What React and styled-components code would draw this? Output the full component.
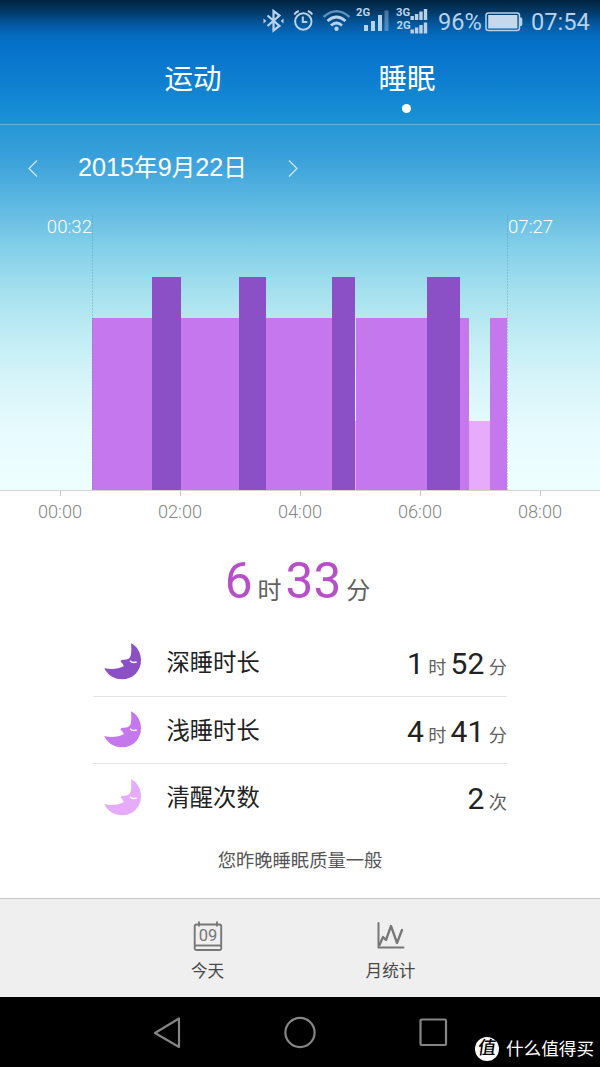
import React from 'react';
import styled, { createGlobalStyle } from 'styled-components';

const colors = {
  deep: '#8b50c6',
  light: '#c578ee',
  awake: '#e6abfb',
};

// Minutes spent in each phase, starting at 00:32
const phases = [
  { type: 'light', minutes: 60 },
  { type: 'deep', minutes: 29 },
  { type: 'light', minutes: 58 },
  { type: 'deep', minutes: 27 },
  { type: 'light', minutes: 66 },
  { type: 'deep', minutes: 23 },
  { type: 'awake', minutes: 1 },
  { type: 'light', minutes: 71 },
  { type: 'deep', minutes: 33 },
  { type: 'light', minutes: 9 },
  { type: 'awake', minutes: 21 },
  { type: 'light', minutes: 17 },
];

const heights = { deep: 213, light: 172, awake: 69 };

const stats = [
  { type: 'deep', label: '深睡时长', parts: [['1', '时'], ['52', '分']] },
  { type: 'light', label: '浅睡时长', parts: [['4', '时'], ['41', '分']] },
  { type: 'awake', label: '清醒次数', parts: [['2', '次']] },
];

const hours = ['00:00', '02:00', '04:00', '06:00', '08:00'];

// Style
const GlobalStyle = createGlobalStyle`
  * { box-sizing: border-box; }
  body {
    margin: 0;
    background: #fff;
    font-family: Roboto, 'Noto Sans CJK SC', sans-serif;
  }
  svg { display: block; flex: none; }
`;
const Screen = styled.div`
  width: 600px;
  height: 1067px;
  display: flex;
  flex-direction: column;
  overflow: hidden;
  background: #fff;
`;
const Sky = styled.div`
  height: 490px;
  flex: none;
  display: flex;
  flex-direction: column;
  background: linear-gradient(
    #00233f 0, #023a68 12px, #0459a0 25px, #046bc0 36px, #0672cb 48px,
    #0c7ccf 75px, #168cd4 110px, #1c93d5 124px, #2598d5 125px, #389fd9 155px,
    #5ab6e0 200px, #84cfe9 248px, #a4e0ee 290px, #bdebf3 330px,
    #d8f5fa 385px, #e7fafd 430px, #eeffff 490px
  );
`;
const StatusBar = styled.div`
  height: 43px;
  flex: none;
  padding-right: 10px;
  display: flex;
  justify-content: flex-end;
  align-items: center;
  color: #b9d2ea;
  line-height: 43px;
`;
const Percent = styled.span`
  width: 47px;
  padding-top: 2px;
  font-size: 23.6px;
`;
const Clock = styled.span`
  width: 59px;
  margin-left: 8px;
  padding-top: 2px;
  font-size: 23.6px;
`;
const Tabs = styled.div`
  height: 82px;
  flex: none;
  padding: 0 86px;
  display: flex;
  border-bottom: 1px solid rgba(255, 255, 255, 0.28);
`;
const Tab = styled.div`
  flex: 1;
  display: flex;
  flex-direction: column;
  align-items: center;
  padding-top: 17px;
  color: #fff;
  font-size: 28.5px;
  line-height: 40px;
`;
const Dot = styled.div`
  width: 9px;
  height: 9px;
  margin: 4px 1px 0 0;
  border-radius: 50%;
  background: #fff;
`;
const DateRow = styled.div`
  height: 86px;
  flex: none;
  padding-left: 28px;
  display: flex;
  align-items: center;
`;
const DateText = styled.div`
  width: 168px;
  margin: 0 42px 0 40px;
  padding-bottom: 1px;
  color: #fff;
  font-family: 'Liberation Sans', 'Noto Sans CJK SC', sans-serif;
  font-size: 25.2px;
  line-height: 36px;
  white-space: nowrap;
`;
const DateUnit = styled.span`
  font-size: 23.6px;
`;
const Chart = styled.div`
  flex: 1;
  display: flex;
  justify-content: center;
  padding-top: 4px;
`;
const EdgeTime = styled.div`
  width: 92px;
  padding-top: 1px;
  color: #fff;
  font-size: 18.6px;
  font-weight: 300;
  line-height: 22px;
  text-align: ${props => props.$end ? 'left' : 'right'};
`;
const Plot = styled.div`
  position: relative;
  width: 416px;
  display: flex;
  align-items: flex-end;

  &::before, &::after {
    content: '';
    position: absolute;
    top: 0;
    bottom: 0;
    width: 1px;
    background: repeating-linear-gradient(rgba(90, 140, 160, 0.35) 0 2px, transparent 2px 3px);
  }
  &::before { left: 0; }
  &::after { right: 0; }
`;
const Phase = styled.div`
  height: ${props => heights[props.$type]}px;
  background: ${props => colors[props.$type]};
`;
const Axis = styled.div`
  height: 52px;
  flex: none;
  display: flex;
  border-top: 1px solid #d4d4d4;
`;
const Hour = styled.div`
  flex: 1;
  display: flex;
  flex-direction: column;
  align-items: center;
  color: #848484;
  font-size: 18.2px;
  font-weight: 300;
  line-height: 22px;

  &::before {
    content: '';
    width: 1px;
    height: 5px;
    margin-bottom: 5px;
    background: #c4c4c4;
  }
`;
const Total = styled.div`
  height: 86px;
  flex: none;
  display: flex;
  justify-content: center;
  align-items: baseline;
  padding-top: 9px;
  padding-right: 1px;
  color: #b750c8;
  font-size: 49.5px;
  line-height: 60px;
`;
const TotalUnit = styled.span`
  margin: 0 4px 0 5px;
  position: relative;
  top: 1px;
  color: #606060;
  font-size: 24px;
`;
const Stats = styled.div`
  width: 414px;
  margin: 0 auto;
  flex: none;
`;
const StatRow = styled.div`
  height: 67.5px;
  padding: 1px 0 0 11px;
  display: flex;
  align-items: center;
  border-top: ${props => props.$first ? '0' : '1px solid #e4e4e4'};
`;
const StatLabel = styled.div`
  flex: 1;
  padding: 0 0 3px 24.5px;
  color: #222;
  font-size: 23.3px;
`;
const StatValue = styled.div`
  display: flex;
  align-items: baseline;
  padding-top: 2px;
  color: #222;
  font-size: 30px;
`;
const StatUnit = styled.span`
  margin-left: 4.5px;
  margin-right: ${props => props.$last ? 0 : 4}px;
  color: #606060;
  font-size: 18.2px;
`;
const Summary = styled.div`
  flex: 1;
  padding-top: 16px;
  color: #555;
  font-size: 18.3px;
  line-height: 27px;
  text-align: center;
`;
const Toolbar = styled.div`
  height: 99px;
  flex: none;
  padding: 0 118px 0 116px;
  display: flex;
  border-top: 1px solid #c8c8c8;
  background: #efefef;
`;
const Tool = styled.div`
  flex: 1;
  display: flex;
  flex-direction: column;
  align-items: center;
  padding-top: 22px;
  color: #484848;
  font-size: 16.6px;
  line-height: 24px;

  svg { margin-bottom: 8px; }
`;
const NavBar = styled.div`
  height: 70px;
  flex: none;
  padding-left: 151.5px;
  display: flex;
  align-items: flex-start;
  background: #000;

  > svg { margin-top: 19px; }
`;
const NavGap = styled.div`
  width: ${props => props.$size}px;
`;
const Brand = styled.div`
  display: flex;
  align-items: center;
  gap: 7.5px;
  margin: 39px 0 0 27px;
  color: #fff;
  font-size: 17.6px;
  line-height: 26px;
  white-space: nowrap;
`;
const BrandSeal = styled.div`
  width: 24px;
  height: 24px;
  flex: none;
  border-radius: 50%;
  background: #fff;
  color: #000;
  font-size: 18px;
  font-weight: 500;
  line-height: 22px;
  text-align: center;

  span {
    display: block;
    transform: skewX(-8deg);
  }
`;

const StatusIcons = () => (
  <svg width="189" height="43" viewBox="249 0 189 43" fill="none" stroke="#b9d2ea" strokeWidth="2">
    <path d="M267.5 15.5 L279.5 26 L273.5 30.5 V11 L279.5 15.5 L267.5 26" strokeWidth="2.2" />
    <path d="M263.500 18.500 l2.800 2.500 -2.800 2.500 z M283.500 18.500 l-2.800 2.500 2.800 2.500 z" fill="#b9d2ea" stroke="none" />
    <circle cx="303.3" cy="21.5" r="8.2" />
    <path d="M302.8 16.5 V22 H307.3 M294.3 14.5 Q295.8 12 298.8 11 M312.3 14.5 Q310.8 12 307.8 11" />
    <path d="M323.5 17 Q336.5 5.5 349.5 17" stroke="#5f8fbd" strokeWidth="2.4" />
    <path d="M327.5 21 Q336.500 13 345.5 21 M331 25.500 Q336.500 20.500 342 25.500" strokeWidth="2.8" />
    <circle cx="336.500" cy="28.7" r="2.2" fill="#b9d2ea" stroke="none" />
    <g fill="#b9d2ea" stroke="none">
      <path d="M364 25h4v6h-4z M371 21h4v10h-4z M378 15h4v16h-4z" />
      <path d="M384.500 10.5h4v20.5h-4z" opacity="0.4" />
      <path d="M410.500 16h3.4v4h-3.4z M414.9 14h3.4v6h-3.4z M419.3 11.5h3.4V20h-3.4z M423.8 9h3.4v11h-3.4z" />
      <path d="M410.500 29.5h3.4v4h-3.4z M414.9 27.5h3.4v6h-3.4z M419.3 25h3.4v8.5h-3.4z M423.8 22.5h3.4v11h-3.4z" />
      <g fontFamily="Roboto" fontWeight="700" fontSize="11.3">
        <text x="356" y="16">2G</text>
        <text x="396" y="16">3G</text>
        <text x="396.5" y="29">2G</text>
      </g>
    </g>
  </svg>
);

const Battery = () => (
  <svg width="38" height="20" viewBox="0 0 38 20">
    <rect x="1" y="1" width="33.5" height="17.5" rx="2.5" fill="none" stroke="#b9d2ea" strokeWidth="1.5" />
    <rect x="3.2" y="3" width="29.2" height="13.5" fill="#c6d8ec" />
    <path d="M35 5.5h1.5l.8 1.2v6l-.8 1.2H35z" fill="#b9d2ea" />
  </svg>
);

const Arrow = ({ next }) => (
  <svg width="10" height="18" viewBox="0 0 10 18" fill="none" stroke="#fff" strokeOpacity="0.75" strokeWidth="1.2">
    <path d={next ? 'M1 1.5 L9 9.5 L1 17.5' : 'M9 1.5 L1 9.5 L9 17.5'} />
  </svg>
);

const Moon = ({ color }) => (
  <svg width="38" height="38" viewBox="27 26 114 114">
    <path
      d="M108 27 C126 36 138 54 138 78 C138 111 113 135 82 135 C55 135 35 119 28 101 C46 106 72 104 87 95 C84 93 85 90 81 86 L77 82 C76 77 81 76 87 76 C96 76 104 73 107 64 C110 53 109 39 108 27 Z"
      fill={color}
    />
    <path d="M105 79 Q112 87 125 83" fill="none" stroke="#fff" strokeWidth="4.5" />
  </svg>
);

const CalendarIcon = () => (
  <svg width="30" height="31" viewBox="0 0 30 31" fill="none" stroke="#777" strokeWidth="1.9">
    <rect x="1.7" y="3.5" width="26.5" height="25.5" rx="1.8" />
    <path d="M2 24.5 H28" />
    <path d="M6 0.5 V5.5 M24 0.5 V5.5" />
    <text x="15" y="20" textAnchor="middle" fill="#777" stroke="none" fontFamily="Roboto" fontSize="16.5">09</text>
  </svg>
);

const ChartIcon = () => (
  <svg width="30" height="31" viewBox="0 0 30 31" fill="none" stroke="#777" strokeWidth="2" strokeLinejoin="round" strokeLinecap="round">
    <path d="M2.500 2 V26.5 H27.5" />
    <path d="M3.5 24 L7 16 L10 19 L15 5 L21 22 L26 9" strokeWidth="2.3" />
  </svg>
);

const App = () => (
  <Screen>
    <GlobalStyle />
    <Sky>
      <StatusBar>
        <StatusIcons />
        <Percent>96%</Percent>
        <Battery />
        <Clock>07:54</Clock>
      </StatusBar>
      <Tabs>
        <Tab>运动</Tab>
        <Tab>睡眠<Dot /></Tab>
      </Tabs>
      <DateRow>
        <Arrow />
        <DateText>
          2015<DateUnit>年</DateUnit>9<DateUnit>月</DateUnit>22<DateUnit>日</DateUnit>
        </DateText>
        <Arrow next />
      </DateRow>
      <Chart>
        <EdgeTime>00:32</EdgeTime>
        <Plot>
          {phases.map((phase, i) => (
            <Phase key={i} $type={phase.type} style={{ width: phase.minutes }} />
          ))}
        </Plot>
        <EdgeTime $end>07:27</EdgeTime>
      </Chart>
    </Sky>
    <Axis>
      {hours.map(hour => <Hour key={hour}>{hour}</Hour>)}
    </Axis>
    <Total>
      6<TotalUnit>时</TotalUnit>33<TotalUnit>分</TotalUnit>
    </Total>
    <Stats>
      {stats.map((stat, i) => (
        <StatRow key={stat.type} $first={i === 0}>
          <Moon color={colors[stat.type]} />
          <StatLabel>{stat.label}</StatLabel>
          <StatValue>
            {stat.parts.map(([value, unit], n) => (
              <React.Fragment key={unit}>
                {value}
                <StatUnit $last={n === stat.parts.length - 1}>{unit}</StatUnit>
              </React.Fragment>
            ))}
          </StatValue>
        </StatRow>
      ))}
    </Stats>
    <Summary>您昨晚睡眠质量一般</Summary>
    <Toolbar>
      <Tool><CalendarIcon />今天</Tool>
      <Tool><ChartIcon />月统计</Tool>
    </Toolbar>
    <NavBar>
      <svg width="30" height="34" viewBox="0 0 30 34" fill="none" stroke="#858585" strokeWidth="2.2" strokeLinejoin="round">
        <path d="M27 2.5 V31 L3 17 Z" />
      </svg>
      <NavGap $size={101} />
      <svg width="34" height="34" viewBox="0 0 34 34" fill="none" stroke="#858585" strokeWidth="2.2">
        <circle cx="17" cy="16.5" r="14.6" />
      </svg>
      <NavGap $size={101} />
      <svg width="30" height="34" viewBox="0 0 30 34" fill="none" stroke="#858585" strokeWidth="2.2">
        <rect x="2.5" y="3.5" width="25.5" height="25.5" rx="1" />
      </svg>
      <Brand>
        <BrandSeal><span>值</span></BrandSeal>
        什么值得买
      </Brand>
    </NavBar>
  </Screen>
);

export default App;
